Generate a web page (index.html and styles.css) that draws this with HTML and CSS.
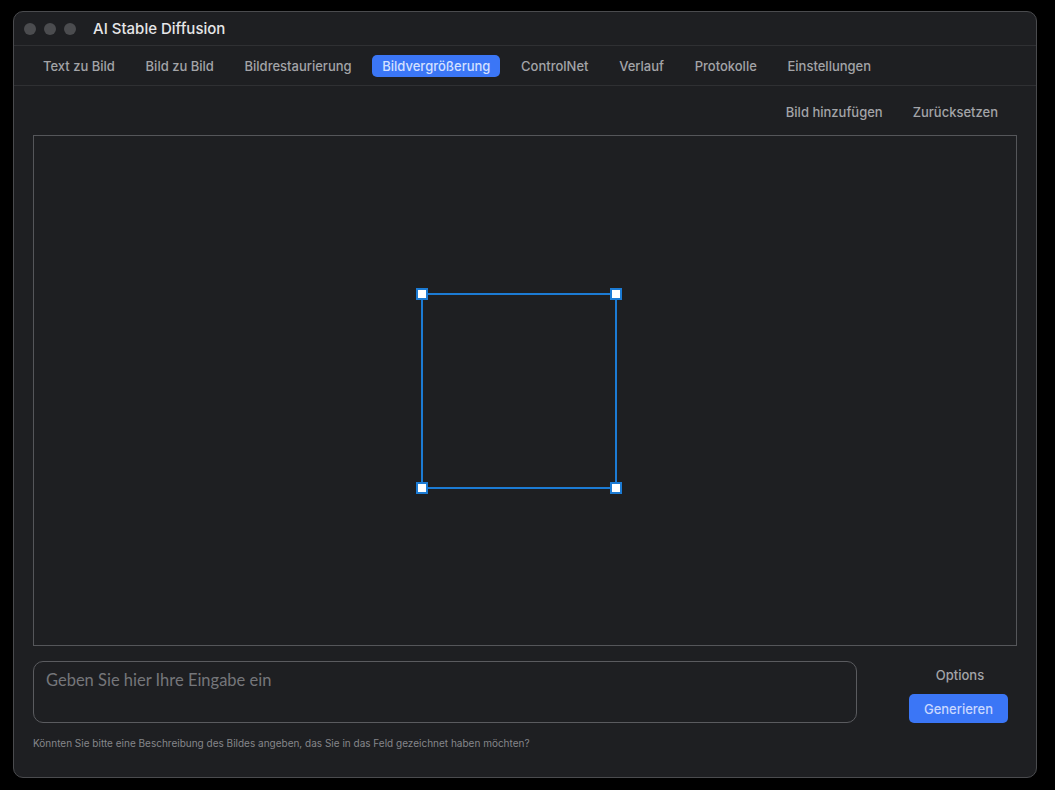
FILE: index.html
```html
<!DOCTYPE html>
<html lang="de">
<head>
<meta charset="utf-8">
<title>AI Stable Diffusion</title>
<link rel="stylesheet" href="styles.css">
</head>
<body>
<div class="window">
  <div class="titlebar">
    <div class="lights"><span class="light"></span><span class="light"></span><span class="light"></span></div>
    <div class="title">AI Stable Diffusion</div>
  </div>
  <nav class="tabs">
    <span class="tab">Text zu Bild</span>
    <span class="tab">Bild zu Bild</span>
    <span class="tab">Bildrestaurierung</span>
    <span class="tab active">Bildvergrößerung</span>
    <span class="tab">ControlNet</span>
    <span class="tab">Verlauf</span>
    <span class="tab">Protokolle</span>
    <span class="tab">Einstellungen</span>
  </nav>
  <main class="content">
    <div class="toolbar">
      <span class="tool">Bild hinzufügen</span>
      <span class="tool">Zurücksetzen</span>
    </div>
    <div class="canvas">
      <div class="selection">
        <span class="handle tl"></span>
        <span class="handle tr"></span>
        <span class="handle bl"></span>
        <span class="handle br"></span>
      </div>
    </div>
    <div class="bottom">
      <div class="prompt">Geben Sie hier Ihre Eingabe ein</div>
      <div class="actions">
        <span class="options">Options</span>
        <span class="generate">Generieren</span>
      </div>
    </div>
    <div class="hint">Könnten Sie bitte eine Beschreibung des Bildes angeben, das Sie in das Feld gezeichnet haben möchten?</div>
  </main>
</div>
</body>
</html>
```
FILE: styles.css
```css
html, body {
  margin: 0;
  padding: 0;
  background: #000;
  height: 100%;
}
body {
  padding: 11px 0 0 13px;
  font-family: Inter, "Noto Sans", sans-serif;
  box-sizing: border-box;
}
.window {
  width: 1024px;
  height: 767px;
  box-sizing: border-box;
  background: #1e1f22;
  border: 1px solid #4a4b4e;
  border-radius: 10px;
  display: flex;
  flex-direction: column;
  overflow: hidden;
}
.titlebar {
  height: 33px;
  display: flex;
  align-items: center;
  border-bottom: 1px solid #2f3033;
  flex-shrink: 0;
}
.lights {
  display: flex;
  gap: 8px;
  padding-left: 10px;
}
.light {
  width: 12px;
  height: 12px;
  border-radius: 50%;
  background: #4b4c4f;
}
.title {
  margin-left: 17px;
  color: #e6e6e8;
  font-size: 15px;
  font-weight: 500;
}
.tabs {
  height: 39px;
  display: flex;
  align-items: center;
  gap: 10.7px;
  padding-left: 19px;
  border-bottom: 1px solid #2f3033;
  flex-shrink: 0;
}
.tab {
  padding: 3px 10px;
  font-size: 13px;
  line-height: 16px;
  font-weight: 500;
  color: #a3a4a8;
  border-radius: 5px;
}
.tab.active {
  background: #3b76f6;
  color: #d4e0ff;
}
.content {
  flex: 1;
  display: flex;
  flex-direction: column;
  padding: 0 19px 0 19px;
}
.toolbar {
  height: 49px;
  display: flex;
  justify-content: flex-end;
  align-items: center;
  padding-top: 3px;
  box-sizing: border-box;
  gap: 10px;
  padding-right: 9px;
}
.tool {
  font-size: 13px;
  font-weight: 500;
  color: #a3a4a8;
  padding: 0 10px;
}
.canvas {
  height: 511px;
  box-sizing: border-box;
  border: 1px solid #55565a;
  display: flex;
  align-items: center;
  justify-content: center;
  margin-bottom: 15px;
}
.selection {
  position: relative;
  width: 196px;
  height: 196px;
  box-sizing: border-box;
  border: 2px solid #1c7bd4;
  margin-right: 13px;
}
.handle {
  position: absolute;
  width: 12px;
  height: 12px;
  box-sizing: border-box;
  background: #fff;
  border: 2px solid #1c7bd4;
}
.tl { left: -7px; top: -7px; }
.tr { right: -7px; top: -7px; }
.bl { left: -7px; bottom: -7px; }
.br { right: -7px; bottom: -7px; }
.bottom {
  display: flex;
  align-items: flex-start;
}
.prompt {
  width: 824px;
  height: 62px;
  box-sizing: border-box;
  border: 1px solid #5a5b5f;
  border-radius: 10px;
  padding: 8px 12px;
  font-family: Lato, "Noto Sans", sans-serif;
  font-size: 16.5px;
  color: #75767a;
}
.actions {
  margin-left: 52px;
  width: 99px;
  display: flex;
  flex-direction: column;
  align-items: center;
}
.options {
  font-size: 13px;
  font-weight: 500;
  color: #a3a4a8;
  margin-top: 6px;
  margin-left: 3px;
  line-height: 16px;
}
.generate {
  margin-top: 11px;
  width: 99px;
  height: 29px;
  box-sizing: border-box;
  background: #3b76f6;
  color: #c9d8ff;
  border-radius: 5px;
  font-size: 13px;
  font-weight: 500;
  display: flex;
  align-items: center;
  justify-content: center;
}
.hint {
  margin-top: 14px;
  font-size: 10px;
  color: #85868a;
}
```
